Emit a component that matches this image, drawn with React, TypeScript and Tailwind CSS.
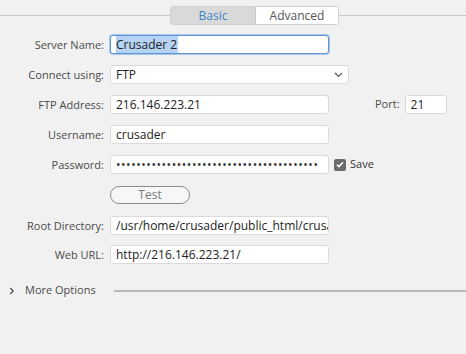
import React from "react";

const font = { fontFamily: '"Open Sans", "DejaVu Sans", sans-serif' };

function Label({ children }: { children: React.ReactNode }) {
  return (
    <div className="w-[104px] shrink-0 text-right text-[11px] leading-[18px] text-[#4a4a4a]">
      {children}
    </div>
  );
}

function Field({ value, w = "w-[219px]", focused = false }: { value: React.ReactNode; w?: string; focused?: boolean }) {
  return (
    <div
      className={`${w} h-[19px] bg-white rounded-[3px] overflow-hidden whitespace-nowrap text-[12px] leading-[17px] text-[#222] pl-[5px] border ${
        focused ? "border-[#5d95d6] shadow-[0_0_0_1px_#a9c8ec]" : "border-[#dadada]"
      }`}
    >
      {value}
    </div>
  );
}

export default function App() {
  return (
    <div className="w-[466px] h-[354px] bg-[#f1f1f1] relative overflow-hidden" style={font}>
      {/* tab bar */}
      <div className="pt-[6px] flex items-center">
        <div className="flex-1 h-px bg-[#c9c9c9]" />
        <div className="flex h-[19px] w-[169px] border border-[#d0d0d0] rounded-[3px] overflow-hidden text-[12px] leading-[17px]">
          <div className="w-[85px] bg-[#d9d9d9] text-[#3d84c6] text-center border-r border-[#c8c8c8]">Basic</div>
          <div className="flex-1 bg-white text-[#555] text-center">Advanced</div>
        </div>
        <div className="w-[127px] h-px bg-[#c9c9c9]" />
      </div>

      <div className="mt-[10px] flex flex-col">
        <div className="flex items-center gap-[6px] h-[19px]">
          <Label>Server Name:</Label>
          <Field
            focused
            value={<span className="bg-[#b5d3f3] pr-[1px]">Crusader 2</span>}
          />
        </div>

        <div className="flex items-center gap-[6px] h-[19px] mt-[11px]">
          <Label>Connect using:</Label>
          <div className="w-[239px] h-[19px] bg-white rounded-[3px] border border-[#dadada] flex items-center justify-between pl-[5px] pr-[5px] text-[12px] text-[#222]">
            <span className="leading-[17px]">FTP</span>
            <svg width="9" height="6" viewBox="0 0 9 6">
              <path d="M1 1 L4.5 4.5 L8 1" fill="none" stroke="#555" strokeWidth="1.2" />
            </svg>
          </div>
        </div>

        <div className="flex items-center gap-[6px] h-[19px] mt-[11px]">
          <Label>FTP Address:</Label>
          <Field value="216.146.223.21" />
          <div className="ml-[40px] text-[11px] text-[#4a4a4a]">Port:</div>
          <div className="ml-[-1px]">
            <Field w="w-[42px]" value="21" />
          </div>
        </div>

        <div className="flex items-center gap-[6px] h-[19px] mt-[11px]">
          <Label>Username:</Label>
          <Field value="crusader" />
        </div>

        <div className="flex items-center gap-[6px] h-[19px] mt-[11px]">
          <Label>Password:</Label>
          <Field
            value={<span className="text-[12px] tracking-[0.55px] text-[#333]">{"•".repeat(40)}</span>}
          />
          <div className="ml-[-1px] w-[12px] h-[12px] rounded-[2px] bg-[#6b6b6b] flex items-center justify-center">
            <svg width="8" height="7" viewBox="0 0 8 7">
              <path d="M1 3.6 L3 5.6 L7 1.2" fill="none" stroke="#fff" strokeWidth="1.5" />
            </svg>
          </div>
          <span className="ml-[-2px] text-[11px] text-[#333]">Save</span>
        </div>

        <div className="flex items-center gap-[6px] h-[19px] mt-[11px]">
          <div className="w-[104px] shrink-0" />
          <div className="w-[80px] h-[18px] rounded-full border border-[#8a8a8a] bg-[#f7f7f7] text-center text-[12px] leading-[16px] text-[#7a7a7a]">
            Test
          </div>
        </div>

        <div className="flex items-center gap-[6px] h-[19px] mt-[12px]">
          <Label>Root Directory:</Label>
          <Field value="/usr/home/crusader/public_html/crusader" />
        </div>

        <div className="flex items-center gap-[6px] h-[19px] mt-[10px]">
          <Label>Web URL:</Label>
          <Field value="http://216.146.223.21/" />
        </div>

        <div className="flex items-center h-[19px] mt-[17px]">
          <svg width="6" height="8" viewBox="0 0 6 8" className="ml-[9px]">
            <path d="M1.2 1 L4.2 4 L1.2 7" fill="none" stroke="#444" strokeWidth="1.1" />
          </svg>
          <span className="ml-[10px] text-[11px] text-[#4a4a4a]">More Options</span>
          <div className="ml-[18px] flex-1 h-[2px] bg-[#b9b9b9]" />
        </div>
      </div>
    </div>
  );
}
